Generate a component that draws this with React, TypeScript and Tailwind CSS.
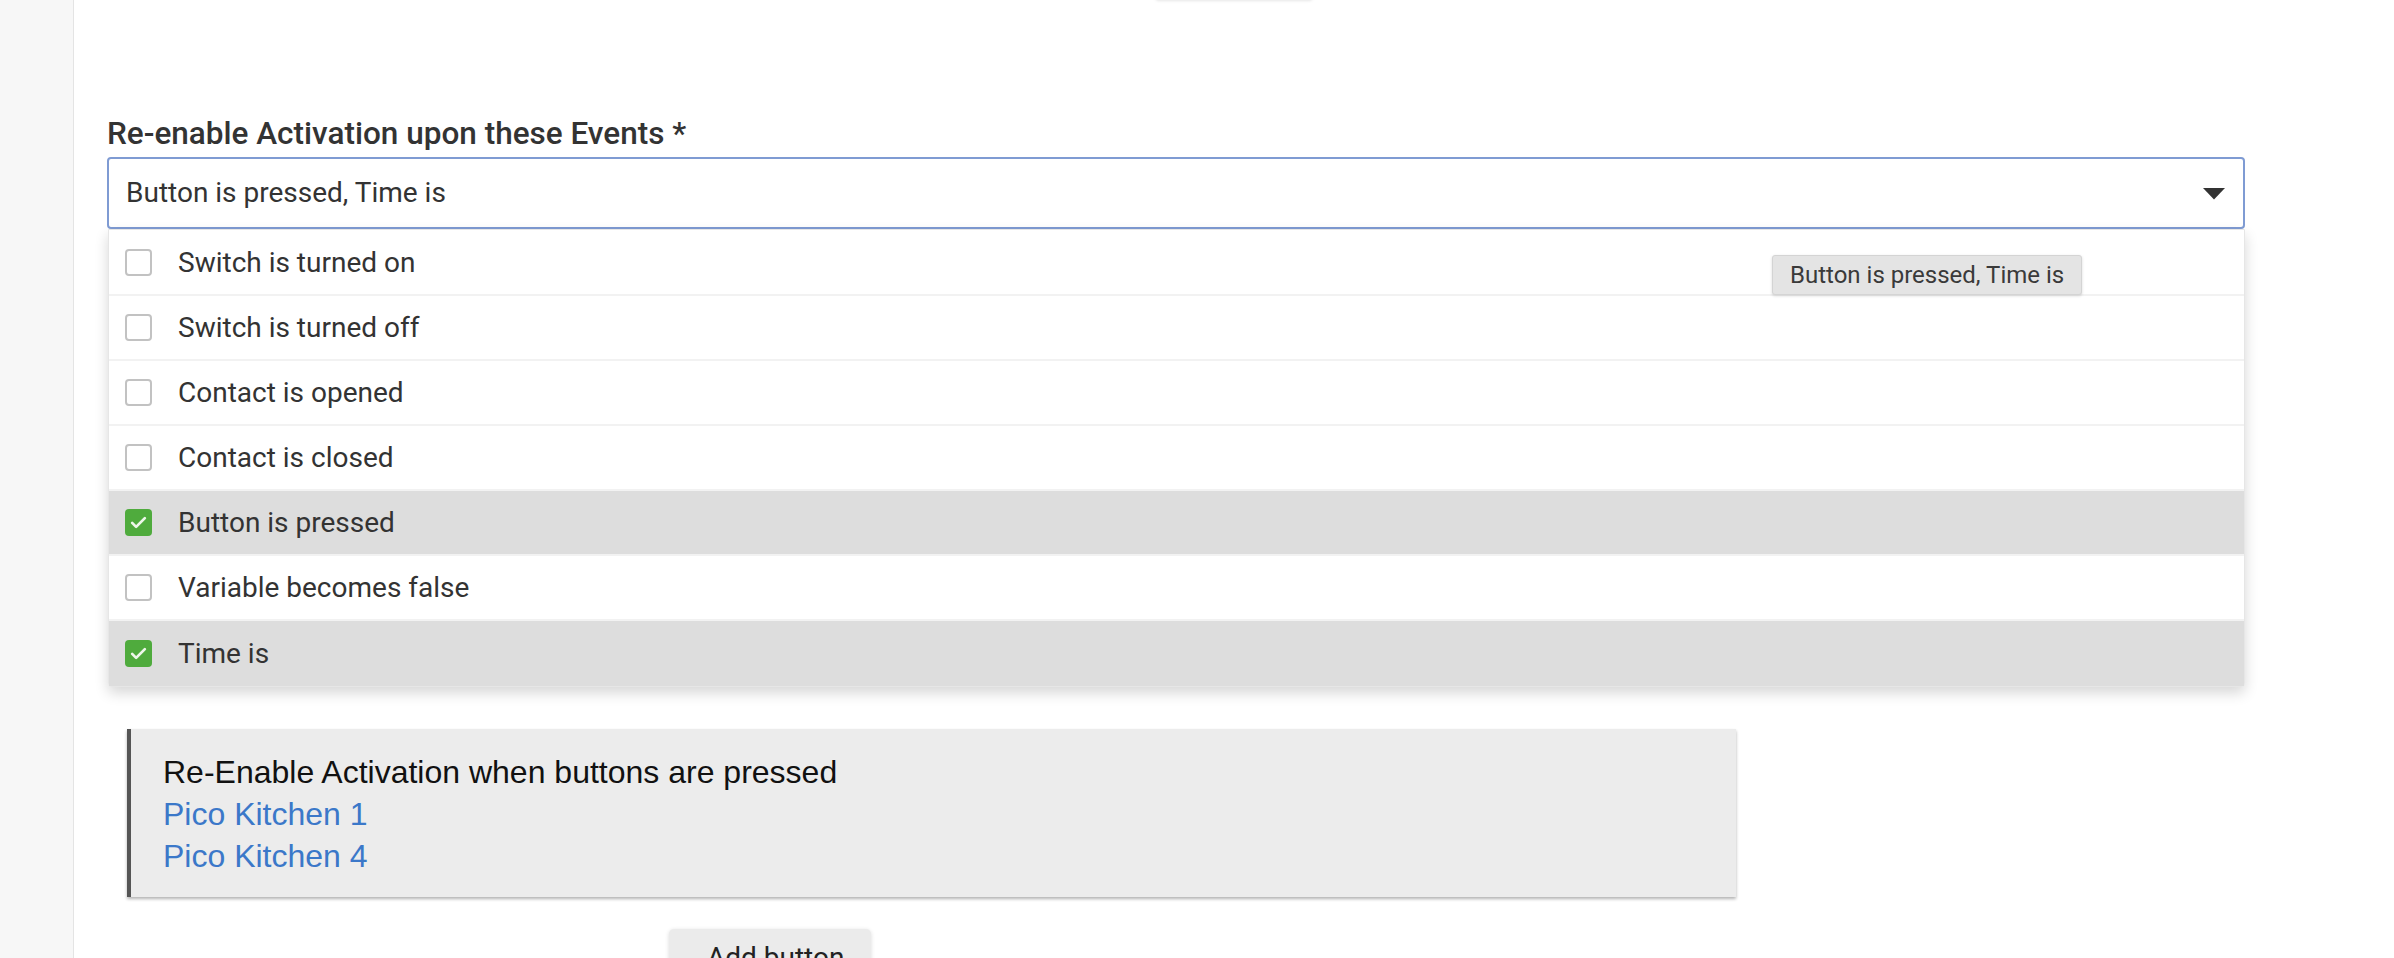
import React from "react";

const EVENTS = [
  { label: "Switch is turned on", checked: false },
  { label: "Switch is turned off", checked: false },
  { label: "Contact is opened", checked: false },
  { label: "Contact is closed", checked: false },
  { label: "Button is pressed", checked: true },
  { label: "Variable becomes false", checked: false },
  { label: "Time is", checked: true }
];

function CheckBox({ checked }: { checked: boolean }) {
  if (checked) {
    return (
      <span className="flex h-[27px] w-[27px] shrink-0 items-center justify-center rounded-[4px] bg-[#4fab3d]">
        <svg width="19" height="19" viewBox="0 0 24 24" fill="none">
          <path d="M4 12.5l5 5L20 6.5" stroke="#eef7ea" strokeWidth="3.4" strokeLinecap="round" strokeLinejoin="round" />
        </svg>
      </span>
    );
  }
  return <span className="h-[27px] w-[27px] shrink-0 rounded-[4px] border-2 border-[#c2c2c2] bg-white" />;
}

export default function App() {
  const selected = EVENTS.filter((event) => event.checked).map((event) => event.label).join(", ");

  return (
    <div className="flex h-[958px] w-[2394px] items-start overflow-hidden bg-white font-['Roboto',sans-serif] text-[#333]">
      <aside className="h-[958px] w-[74px] shrink-0 border-r border-[#e4e4e4] bg-[#f7f7f7]" />

      <main className="flex flex-1 flex-col pl-[33px]">
        {/* edge of the button that sits above the viewport */}
        <div className="-mt-[30px] ml-[1048px] h-[30px] w-[158px] shrink-0 rounded-b-[4px] bg-white shadow-[0_1px_3px_rgba(0,0,0,0.10)]" />

        <label className="mt-[115px] shrink-0 text-[31.5px] leading-[38px] font-medium text-[#333]">
          Re-enable Activation upon these Events *
        </label>

        <div className="mt-[4px] flex h-[72px] w-[2138px] shrink-0 items-center justify-between rounded-[4px] border-2 border-[#7f9bd3] pl-[17px] pr-[17px]">
          <span className="text-[28px] leading-[34px] text-[#333]">{selected}</span>
          <svg width="24" height="13" viewBox="0 0 24 13">
            <path d="M1 1h22L12 12.5z" fill="#333" />
          </svg>
        </div>

        <div className="relative ml-[1px] w-[2137px] shrink-0 rounded-b-[4px] border border-[#e6e6e6] bg-white pt-[1px] shadow-[0_6px_14px_rgba(0,0,0,0.16)]">
          {EVENTS.map((event, index) => (
            <div
              key={event.label}
              className={[
                "flex h-[65px] items-center gap-[26px] pl-[16px]",
                index < EVENTS.length - 1 ? "border-b-2 border-[#f2f2f2]" : "",
                event.checked ? "bg-[#dddddd]" : "bg-white"
              ].join(" ")}
            >
              <CheckBox checked={event.checked} />
              <span className="text-[28px] leading-[34px] text-[#333]">{event.label}</span>
            </div>
          ))}

          <div className="absolute left-[1663px] top-[25px] flex h-[40px] items-center rounded-[3px] border border-[#d4d4d4] bg-[#e4e4e4] px-[17px] text-[24px] text-[#3a3a3a] shadow-[0_1px_3px_rgba(0,0,0,0.15)]">
            {selected}
          </div>
        </div>

        <section className="ml-[20px] mt-[42px] w-[1609px] shrink-0 border-l-4 border-[#555] bg-[#ececec] pb-[20px] pl-[32px] pt-[22px] font-['Liberation_Sans',Arial,sans-serif] text-[32px] leading-[42px] shadow-[0_2px_3px_rgba(0,0,0,0.3)]">
          <div className="text-[#111]">Re-Enable Activation when buttons are pressed</div>
          <div className="text-[#3b78c9]">Pico Kitchen 1</div>
          <div className="text-[#3b78c9]">Pico Kitchen 4</div>
        </section>

        <div className="ml-[562px] mt-[32px] w-[202px] shrink-0 rounded-[5px] bg-[#ebebeb] pb-[10px] pl-[38px] pt-[9px] text-[28px] leading-[40px] text-[#222] shadow-[0_1px_4px_rgba(0,0,0,0.15)]">
          Add button
        </div>
      </main>
    </div>
  );
}
